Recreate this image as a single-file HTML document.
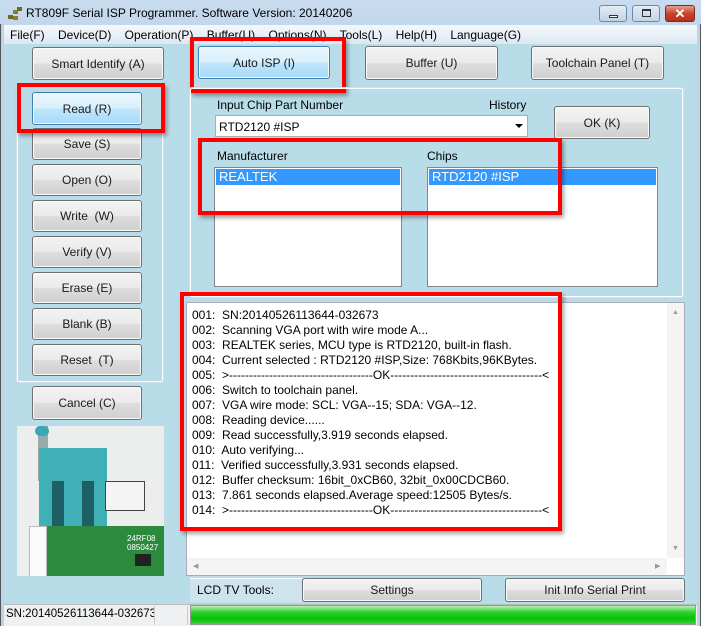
<!DOCTYPE html>
<html><head><meta charset="utf-8"><style>
*{box-sizing:border-box;margin:0;padding:0}
body{width:701px;height:626px;overflow:hidden;background:#b9dde8;font-family:"Liberation Sans",sans-serif;font-size:12px;color:#000;position:relative}
.a{position:absolute}
.btn{position:absolute;border:1px solid #707070;border-radius:3px;background:linear-gradient(#f2f2f2 0%,#ebebeb 48%,#dddddd 52%,#cfcfcf 100%);display:flex;align-items:center;justify-content:center;font-size:12px;color:#1a1a1a;box-shadow:inset 0 0 0 1px #fafafa}
.blue{border-color:#3c7fb1;background:linear-gradient(#eaf6fd 0%,#d9f0fc 48%,#bee6fd 52%,#a7d9f5 100%)}
.red{position:absolute;border:4px solid #f00;box-shadow:2px 3px 4px rgba(0,0,0,.35)}
.grp{position:absolute;border:1px solid #fff;outline:1px solid #d5dfe5;border-radius:2px}
.list{position:absolute;background:#fff;border:1px solid #828790}
.sel{position:absolute;background:#3399ff;color:#fff;font-size:13px;padding-left:3px;line-height:16px}
.log div{height:15px;line-height:15px;font-size:12px;white-space:pre}
</style></head><body>
<div class="a" style="left:0;top:0;width:701px;height:44px;background:linear-gradient(#c9dcef,#bcd3ea)"></div>
<div class="a" style="left:8px;top:7px;width:14px;height:14px">
<div class="a" style="left:0;top:8px;width:5px;height:4px;background:#6b6a2a"></div>
<div class="a" style="left:5px;top:3px;width:5px;height:4px;background:#8a7f2e"></div>
<div class="a" style="left:9px;top:0;width:5px;height:4px;background:#6b6a2a"></div>
<div class="a" style="left:5px;top:9px;width:5px;height:4px;background:#8a7f2e"></div></div>
<div class="a" style="left:26px;top:6px;font-size:12px;color:#000">RT809F Serial ISP Programmer. Software Version: 20140206</div>
<div class="a" style="left:599px;top:5px;width:28px;height:17px;border:1px solid #6d88a8;border-radius:3px;background:linear-gradient(#e3ecf6,#c2d3e6)"><div class="a" style="left:9px;top:9px;width:9px;height:3px;border:1px solid #333;background:#fff"></div></div>
<div class="a" style="left:632px;top:5px;width:28px;height:17px;border:1px solid #6d88a8;border-radius:3px;background:linear-gradient(#e3ecf6,#c2d3e6)"><div class="a" style="left:9px;top:3px;width:9px;height:8px;border:1px solid #333;border-top-width:2px"></div></div>
<div class="a" style="left:665px;top:5px;width:30px;height:17px;border:1px solid #7a2a22;border-radius:3px;background:linear-gradient(#e8a08f,#c8432c 50%,#b8301c);color:#fff;font-weight:bold;font-size:13px;text-align:center;line-height:15px">✕</div>
<div class="a" style="left:4px;top:25px;width:693px;height:19px;background:linear-gradient(#f4f8fc,#dde8f3)"></div>
<div class="a" style="left:10px;top:28px;font-size:12px;white-space:pre">File(F)    Device(D)    Operation(P)    Buffer(U)    Options(N)    Tools(L)    Help(H)    Language(G)</div>
<div class="a" style="left:0;top:24px;width:4px;height:602px;background:#bcd3ea;border-left:1px solid #555"></div>
<div class="a" style="left:697px;top:24px;width:4px;height:602px;background:#bcd3ea;border-right:1px solid #555"></div>

<div class="btn" style="left:32px;top:47px;width:132px;height:33px">Smart Identify (A)</div>
<div class="grp" style="left:17px;top:86px;width:146px;height:296px"></div>
<div class="btn blue" style="left:32px;top:92px;width:110px;height:33px">Read (R)</div>
<div class="btn" style="left:32px;top:128px;width:110px;height:32px">Save (S)</div>
<div class="btn" style="left:32px;top:164px;width:110px;height:32px">Open (O)</div>
<div class="btn" style="left:32px;top:200px;width:110px;height:32px">Write&nbsp; (W)</div>
<div class="btn" style="left:32px;top:236px;width:110px;height:32px">Verify (V)</div>
<div class="btn" style="left:32px;top:272px;width:110px;height:32px">Erase (E)</div>
<div class="btn" style="left:32px;top:308px;width:110px;height:32px">Blank (B)</div>
<div class="btn" style="left:32px;top:344px;width:110px;height:32px">Reset&nbsp; (T)</div>
<div class="red" style="left:17px;top:83px;width:148px;height:50px"></div>
<div class="btn" style="left:32px;top:386px;width:110px;height:34px">Cancel (C)</div>
<div class="a" style="left:17px;top:426px;width:147px;height:150px;background:#eceeed;overflow:hidden">
<div class="a" style="left:21px;top:0;width:10px;height:55px;background:#9aa"></div>
<div class="a" style="left:18px;top:0;width:14px;height:10px;border-radius:7px;background:#3aa7b5"></div>
<div class="a" style="left:22px;top:22px;width:68px;height:130px;background:#3fb0b5"></div>
<div class="a" style="left:35px;top:55px;width:12px;height:45px;background:#1c5f66"></div>
<div class="a" style="left:65px;top:55px;width:12px;height:45px;background:#1c5f66"></div>
<div class="a" style="left:88px;top:55px;width:40px;height:30px;border:1px solid #444;background:#f4f4f4"></div>
<div class="a" style="left:28px;top:100px;width:119px;height:60px;background:#2c8a3d"></div>
<div class="a" style="left:12px;top:100px;width:18px;height:65px;background:#fafafa;border:1px solid #bbb"></div>
<div class="a" style="left:118px;top:128px;width:16px;height:12px;background:#222"></div>
<div class="a" style="left:110px;top:108px;color:#fff;font-size:8px;line-height:9px">24RF08<br>0850427</div>
</div>

<div class="btn blue" style="left:198px;top:46px;width:132px;height:33px">Auto ISP (I)</div>
<div class="red" style="left:190px;top:37px;width:156px;height:56px"></div>
<div class="btn" style="left:365px;top:46px;width:133px;height:34px">Buffer (U)</div>
<div class="btn" style="left:531px;top:46px;width:133px;height:34px">Toolchain Panel (T)</div>

<div class="grp" style="left:190px;top:88px;width:493px;height:209px"></div>
<div class="a" style="left:217px;top:98px">Input Chip Part Number</div>
<div class="a" style="left:489px;top:98px">History</div>
<div class="a" style="left:215px;top:115px;width:313px;height:22px;background:#fff;border:1px solid #abadb3;padding:4px 0 0 3px">RTD2120 #ISP<span class="a" style="right:4px;top:8px;width:0;height:0;border-left:4px solid transparent;border-right:4px solid transparent;border-top:4px solid #000"></span></div>
<div class="btn" style="left:554px;top:106px;width:96px;height:33px">OK (K)</div>
<div class="a" style="left:217px;top:149px">Manufacturer</div>
<div class="a" style="left:427px;top:149px">Chips</div>
<div class="list" style="left:214px;top:167px;width:188px;height:120px"><div class="sel" style="left:1px;top:1px;width:184px">REALTEK</div></div>
<div class="list" style="left:427px;top:167px;width:231px;height:120px"><div class="sel" style="left:1px;top:1px;width:227px">RTD2120 #ISP</div></div>
<div class="red" style="left:198px;top:138px;width:364px;height:77px"></div>

<div class="a" style="left:186px;top:302px;width:499px;height:274px;background:#fff;border:1px solid #aab"></div>
<div class="a" style="left:667px;top:303px;width:17px;height:255px;background:#f4f4f4"></div>
<div class="a" style="left:187px;top:558px;width:480px;height:17px;background:#f4f4f4"></div>
<div class="a" style="left:672px;top:309px;font-size:7px;color:#999">▲</div>
<div class="a" style="left:672px;top:545px;font-size:7px;color:#999">▼</div>
<div class="a" style="left:193px;top:562px;font-size:7px;color:#999">◀</div>
<div class="a" style="left:655px;top:562px;font-size:7px;color:#999">▶</div>
<div class="a log" style="left:192px;top:308px">
<div>001:  SN:20140526113644-032673</div>
<div>002:  Scanning VGA port with wire mode A...</div>
<div>003:  REALTEK series, MCU type is RTD2120, built-in flash.</div>
<div>004:  Current selected : RTD2120 #ISP,Size: 768Kbits,96KBytes.</div>
<div>005:  &gt;------------------------------------OK--------------------------------------&lt;</div>
<div>006:  Switch to toolchain panel.</div>
<div>007:  VGA wire mode: SCL: VGA--15; SDA: VGA--12.</div>
<div>008:  Reading device......</div>
<div>009:  Read successfully,3.919 seconds elapsed.</div>
<div>010:  Auto verifying...</div>
<div>011:  Verified successfully,3.931 seconds elapsed.</div>
<div>012:  Buffer checksum: 16bit_0xCB60, 32bit_0x00CDCB60.</div>
<div>013:  7.861 seconds elapsed.Average speed:12505 Bytes/s.</div>
<div>014:  &gt;------------------------------------OK--------------------------------------&lt;</div>
</div>
<div class="red" style="left:180px;top:292px;width:382px;height:239px"></div>

<div class="a" style="left:190px;top:578px;width:112px;height:24px;background:#cfe3ec;border-top:1px solid #fff"></div>
<div class="a" style="left:197px;top:583px">LCD TV Tools:</div>
<div class="btn" style="left:302px;top:578px;width:180px;height:24px">Settings</div>
<div class="btn" style="left:505px;top:578px;width:180px;height:24px">Init Info Serial Print</div>
<div class="a" style="left:4px;top:604px;width:693px;height:22px;background:#eef0f2;border-top:1px solid #bbb"></div>
<div class="a" style="left:4px;top:606px;width:151px;height:19px;border-right:1px solid #ccc;padding:2px 0 0 2px;white-space:nowrap;font-size:11.5px;overflow:hidden">SN:20140526113644-032673</div>
<div class="a" style="left:155px;top:606px;width:33px;height:19px;border-right:1px solid #ccc"></div>
<div class="a" style="left:190px;top:605px;width:506px;height:20px;border:1px solid #999;background:linear-gradient(#b8f0b8,#2bd22b 35%,#06c106 70%,#3fcf3f)"></div>
</body></html>
